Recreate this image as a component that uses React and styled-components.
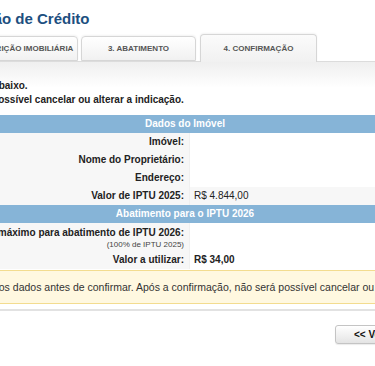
import React from 'react';
import styled, { createGlobalStyle } from 'styled-components';

const GlobalStyle = createGlobalStyle`
  html, body {
    margin: 0;
    padding: 0;
    background: #fff;
  }
  body {
    font-family: "Liberation Sans", Arial, Helvetica, sans-serif;
    color: #222;
  }
`;

const Viewport = styled.div`
  width: 375px;
  height: 366px;
  overflow: hidden;
`;

// the page is wider than the window, we only see a slice of it
const Page = styled.div`
  width: 690px;
  margin-left: -160px;
`;

const Title = styled.h1`
  margin: 0;
  padding: 10px 0 0 102px;
  height: 23px;
  font-size: 15px;
  line-height: 18px;
  font-weight: bold;
  color: #1d4f80;
`;

const Tabs = styled.div`
  display: flex;
  align-items: flex-end;
  gap: 3px;
  padding-left: 123px;
  height: 28px;
`;

const Tab = styled.div`
  box-sizing: border-box;
  width: ${p => (p.$active ? '117px' : '115px')};
  height: ${p => (p.$active ? '28px' : '25px')};
  margin-bottom: ${p => (p.$active ? '-1px' : '0')};
  margin-left: ${p => (p.$active ? '1px' : '0')};
  display: flex;
  align-items: center;
  justify-content: center;
  font-size: 8px;
  font-weight: bold;
  color: #555;
  white-space: nowrap;
  border: 1px solid #d6d6d6;
  border-bottom: ${p => (p.$active ? 'none' : '1px solid #d6d6d6')};
  border-radius: 4px 4px 0 0;
  background: ${p => (p.$active ? 'linear-gradient(#fbfbfb, #f1f1f1)' : 'linear-gradient(#ffffff, #f1f1f1)')};
  box-shadow: 0 -1px 2px rgba(0, 0, 0, 0.05);
  position: relative;
  z-index: ${p => (p.$active ? 2 : 1)};
`;

const Panel = styled.div`
  border-top: 1px solid #dcdcdc;
  border-bottom: 2px solid #e2e2e2;
  background: linear-gradient(#efefef, #ffffff 26px);
  padding-top: 17px;
  padding-bottom: 5px;
`;

const Intro = styled.p`
  margin: 0 0 8px 0;
  padding-left: 7px;
  font-size: 10px;
  font-weight: bold;
  line-height: 14px;
  color: #222;
`;

const Table = styled.div`
  display: grid;
  grid-template-columns: 349px 1fr;
`;

const Header = styled.div`
  grid-column: 1 / -1;
  height: 18px;
  line-height: 18px;
  text-align: center;
  background: #86b4d7;
  color: #fff;
  font-size: 10px;
  font-weight: bold;
`;

const Label = styled.div`
  min-height: ${p => (p.$tall ? '28px' : '18px')};
  padding: ${p => (p.$tall ? '3px 5px 0 0' : '0 5px 0 0')};
  box-sizing: border-box;
  line-height: ${p => (p.$tall ? '13px' : '18px')};
  text-align: right;
  font-size: 10px;
  font-weight: bold;
  color: #222;
  background: #f7f7f7;
  white-space: nowrap;
`;

const Note = styled.div`
  font-size: 8px;
  font-weight: normal;
  color: #444;
  line-height: 12px;
`;

const Value = styled.div`
  padding-left: 4px;
  line-height: 18px;
  font-size: 10px;
  font-weight: ${p => (p.$bold ? 'bold' : 'normal')};
  color: #222;
  background: ${p => (p.$shade ? '#f7f7f7' : '#fff')};
  border-left: 1px solid #f0f0f0;
`;

const Warning = styled.div`
  margin-top: 1px;
  height: 32px;
  line-height: 32px;
  padding-left: 115px;
  background: #fff8e0;
  border-top: 1px solid #f3dc8f;
  border-bottom: 1px solid #f3dc8f;
  font-size: 10.5px;
  color: #333;
  white-space: nowrap;
`;

const Actions = styled.div`
  display: flex;
  padding: 14px 0 0 495px;
`;

const Button = styled.button`
  width: 110px;
  height: 19px;
  padding: 0 0 0 18px;
  text-align: left;
  font-family: "Liberation Sans", Arial, sans-serif;
  font-size: 10px;
  font-weight: bold;
  color: #111;
  border: 1px solid #c4c4c4;
  border-radius: 3px;
  background: linear-gradient(#ffffff, #e4e4e4);
  box-shadow: 0 1px 1px rgba(0, 0, 0, 0.08);
`;

export default function App() {
  return (
    <Viewport>
      <GlobalStyle />
      <Page>
        <Title>Indicação de Crédito</Title>
        <Tabs>
          <Tab>2. INSCRIÇÃO IMOBILIÁRIA</Tab>
          <Tab>3. ABATIMENTO</Tab>
          <Tab $active>4. CONFIRMAÇÃO</Tab>
        </Tabs>
        <Panel>
          <Intro>
            Confira atentamente os dados abaixo.
            <br />
            Após a confirmação, não será possível cancelar ou alterar a indicação.
          </Intro>
          <Table>
            <Header>Dados do Imóvel</Header>
            <Label>Imóvel:</Label>
            <Value />
            <Label>Nome do Proprietário:</Label>
            <Value />
            <Label>Endereço:</Label>
            <Value />
            <Label>Valor de IPTU 2025:</Label>
            <Value $shade>R$ 4.844,00</Value>
            <Header>Abatimento para o IPTU 2026</Header>
            <Label $tall>
              Valor máximo para abatimento de IPTU 2026:
              <Note>(100% de IPTU 2025)</Note>
            </Label>
            <Value />
            <Label>Valor a utilizar:</Label>
            <Value $bold>R$ 34,00</Value>
          </Table>
          <Warning>
            Verifique os dados antes de confirmar. Após a confirmação, não será possível cancelar ou alterar a indicação.
          </Warning>
        </Panel>
        <Actions>
          <Button>&lt;&lt; Voltar</Button>
        </Actions>
      </Page>
    </Viewport>
  );
}
